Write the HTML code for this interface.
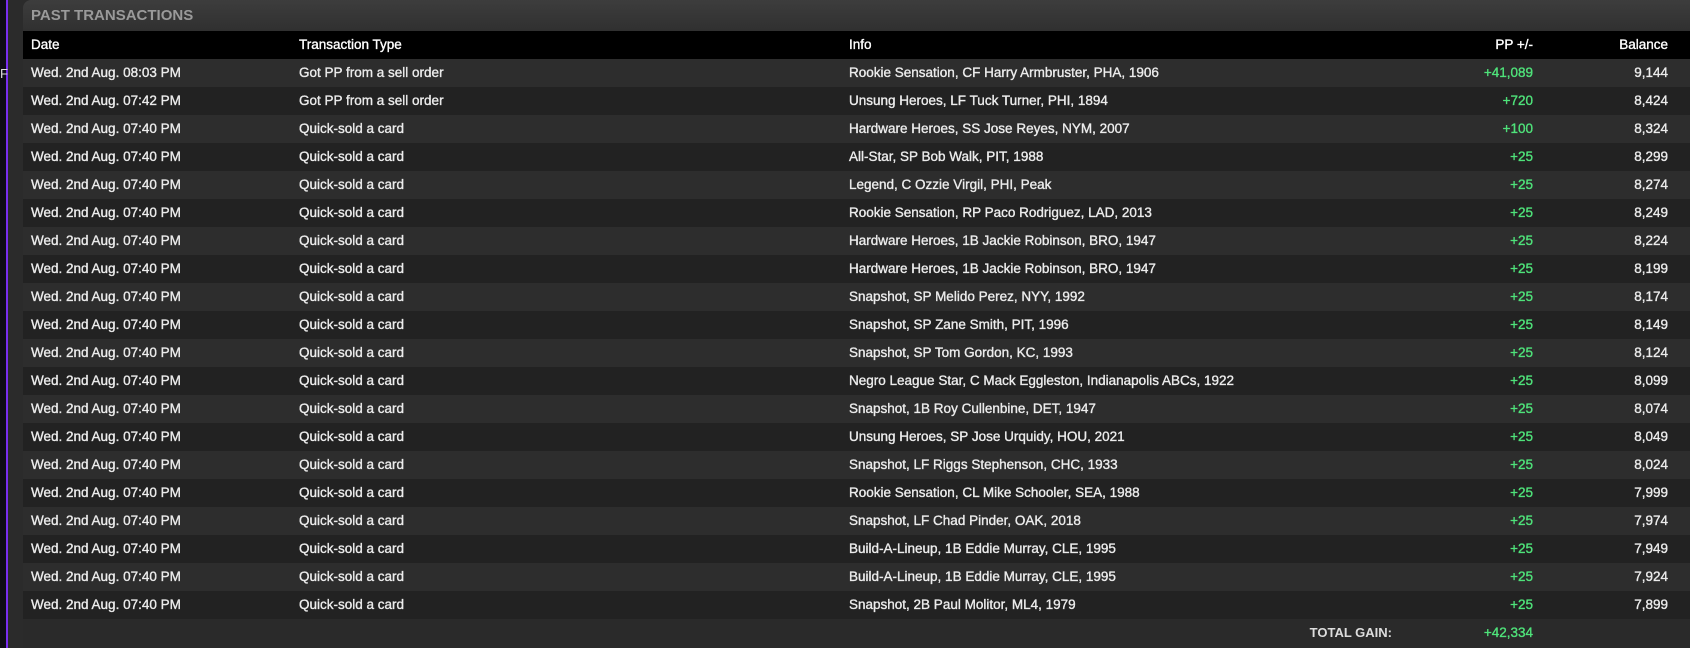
<!DOCTYPE html>
<html><head><meta charset="utf-8"><style>
*{margin:0;padding:0;box-sizing:border-box}
body{width:1690px;height:648px;overflow:hidden;background:#2b2b2b;font-family:"Liberation Sans",sans-serif;position:relative}
.lb{position:absolute;left:0;top:0;width:6px;height:648px;background:#0f0d16}
.pl{position:absolute;left:6px;top:0;width:2px;height:648px;background:#7a2ef0}
.f{position:absolute;left:0;top:66px;color:#ddd;font-size:13px}
.panel{position:absolute;left:23px;top:0;width:1667px;height:648px;background:#2a2a2a;border-top-left-radius:8px;overflow:hidden}
.title{height:31px;background:linear-gradient(#3d3d3d,#303030);color:#9a9a9a;font-weight:bold;font-size:15px;line-height:32px;padding-left:8px}
.row{position:relative;height:28px;font-size:13.5px;line-height:28px;color:#ececec;-webkit-text-stroke:0.35px currentColor}
.row span{position:absolute;top:0;white-space:nowrap}
.hd{background:#000;color:#fff}
.o{background:#2d2d2d}.e{background:#222}
.c1{left:8px}.c2{left:276px}.c3{left:826px}
.c4{right:157px;text-align:right}.c5{right:22px;text-align:right}
.g{color:#4fe37a}
.tot{background:#2a2a2a;height:29px}
</style></head><body>
<div class="lb"></div><div class="pl"></div><div class="f">F</div>
<div class="panel">
<div class="title">PAST TRANSACTIONS</div>
<div class="row hd"><span class="c1">Date</span><span class="c2">Transaction Type</span><span class="c3">Info</span><span class="c4">PP +/-</span><span class="c5">Balance</span></div>
<div class="row o"><span class="c1">Wed. 2nd Aug. 08:03 PM</span><span class="c2">Got PP from a sell order</span><span class="c3">Rookie Sensation, CF Harry Armbruster, PHA, 1906</span><span class="c4 g">+41,089</span><span class="c5">9,144</span></div>
<div class="row e"><span class="c1">Wed. 2nd Aug. 07:42 PM</span><span class="c2">Got PP from a sell order</span><span class="c3">Unsung Heroes, LF Tuck Turner, PHI, 1894</span><span class="c4 g">+720</span><span class="c5">8,424</span></div>
<div class="row o"><span class="c1">Wed. 2nd Aug. 07:40 PM</span><span class="c2">Quick-sold a card</span><span class="c3">Hardware Heroes, SS Jose Reyes, NYM, 2007</span><span class="c4 g">+100</span><span class="c5">8,324</span></div>
<div class="row e"><span class="c1">Wed. 2nd Aug. 07:40 PM</span><span class="c2">Quick-sold a card</span><span class="c3">All-Star, SP Bob Walk, PIT, 1988</span><span class="c4 g">+25</span><span class="c5">8,299</span></div>
<div class="row o"><span class="c1">Wed. 2nd Aug. 07:40 PM</span><span class="c2">Quick-sold a card</span><span class="c3">Legend, C Ozzie Virgil, PHI, Peak</span><span class="c4 g">+25</span><span class="c5">8,274</span></div>
<div class="row e"><span class="c1">Wed. 2nd Aug. 07:40 PM</span><span class="c2">Quick-sold a card</span><span class="c3">Rookie Sensation, RP Paco Rodriguez, LAD, 2013</span><span class="c4 g">+25</span><span class="c5">8,249</span></div>
<div class="row o"><span class="c1">Wed. 2nd Aug. 07:40 PM</span><span class="c2">Quick-sold a card</span><span class="c3">Hardware Heroes, 1B Jackie Robinson, BRO, 1947</span><span class="c4 g">+25</span><span class="c5">8,224</span></div>
<div class="row e"><span class="c1">Wed. 2nd Aug. 07:40 PM</span><span class="c2">Quick-sold a card</span><span class="c3">Hardware Heroes, 1B Jackie Robinson, BRO, 1947</span><span class="c4 g">+25</span><span class="c5">8,199</span></div>
<div class="row o"><span class="c1">Wed. 2nd Aug. 07:40 PM</span><span class="c2">Quick-sold a card</span><span class="c3">Snapshot, SP Melido Perez, NYY, 1992</span><span class="c4 g">+25</span><span class="c5">8,174</span></div>
<div class="row e"><span class="c1">Wed. 2nd Aug. 07:40 PM</span><span class="c2">Quick-sold a card</span><span class="c3">Snapshot, SP Zane Smith, PIT, 1996</span><span class="c4 g">+25</span><span class="c5">8,149</span></div>
<div class="row o"><span class="c1">Wed. 2nd Aug. 07:40 PM</span><span class="c2">Quick-sold a card</span><span class="c3">Snapshot, SP Tom Gordon, KC, 1993</span><span class="c4 g">+25</span><span class="c5">8,124</span></div>
<div class="row e"><span class="c1">Wed. 2nd Aug. 07:40 PM</span><span class="c2">Quick-sold a card</span><span class="c3">Negro League Star, C Mack Eggleston, Indianapolis ABCs, 1922</span><span class="c4 g">+25</span><span class="c5">8,099</span></div>
<div class="row o"><span class="c1">Wed. 2nd Aug. 07:40 PM</span><span class="c2">Quick-sold a card</span><span class="c3">Snapshot, 1B Roy Cullenbine, DET, 1947</span><span class="c4 g">+25</span><span class="c5">8,074</span></div>
<div class="row e"><span class="c1">Wed. 2nd Aug. 07:40 PM</span><span class="c2">Quick-sold a card</span><span class="c3">Unsung Heroes, SP Jose Urquidy, HOU, 2021</span><span class="c4 g">+25</span><span class="c5">8,049</span></div>
<div class="row o"><span class="c1">Wed. 2nd Aug. 07:40 PM</span><span class="c2">Quick-sold a card</span><span class="c3">Snapshot, LF Riggs Stephenson, CHC, 1933</span><span class="c4 g">+25</span><span class="c5">8,024</span></div>
<div class="row e"><span class="c1">Wed. 2nd Aug. 07:40 PM</span><span class="c2">Quick-sold a card</span><span class="c3">Rookie Sensation, CL Mike Schooler, SEA, 1988</span><span class="c4 g">+25</span><span class="c5">7,999</span></div>
<div class="row o"><span class="c1">Wed. 2nd Aug. 07:40 PM</span><span class="c2">Quick-sold a card</span><span class="c3">Snapshot, LF Chad Pinder, OAK, 2018</span><span class="c4 g">+25</span><span class="c5">7,974</span></div>
<div class="row e"><span class="c1">Wed. 2nd Aug. 07:40 PM</span><span class="c2">Quick-sold a card</span><span class="c3">Build-A-Lineup, 1B Eddie Murray, CLE, 1995</span><span class="c4 g">+25</span><span class="c5">7,949</span></div>
<div class="row o"><span class="c1">Wed. 2nd Aug. 07:40 PM</span><span class="c2">Quick-sold a card</span><span class="c3">Build-A-Lineup, 1B Eddie Murray, CLE, 1995</span><span class="c4 g">+25</span><span class="c5">7,924</span></div>
<div class="row e"><span class="c1">Wed. 2nd Aug. 07:40 PM</span><span class="c2">Quick-sold a card</span><span class="c3">Snapshot, 2B Paul Molitor, ML4, 1979</span><span class="c4 g">+25</span><span class="c5">7,899</span></div>
<div class="row tot"><span style="right:298px;font-weight:bold;font-size:13px;color:#ddd;-webkit-text-stroke:0">TOTAL GAIN:</span><span class="c4 g">+42,334</span></div>
</div>
</body></html>
